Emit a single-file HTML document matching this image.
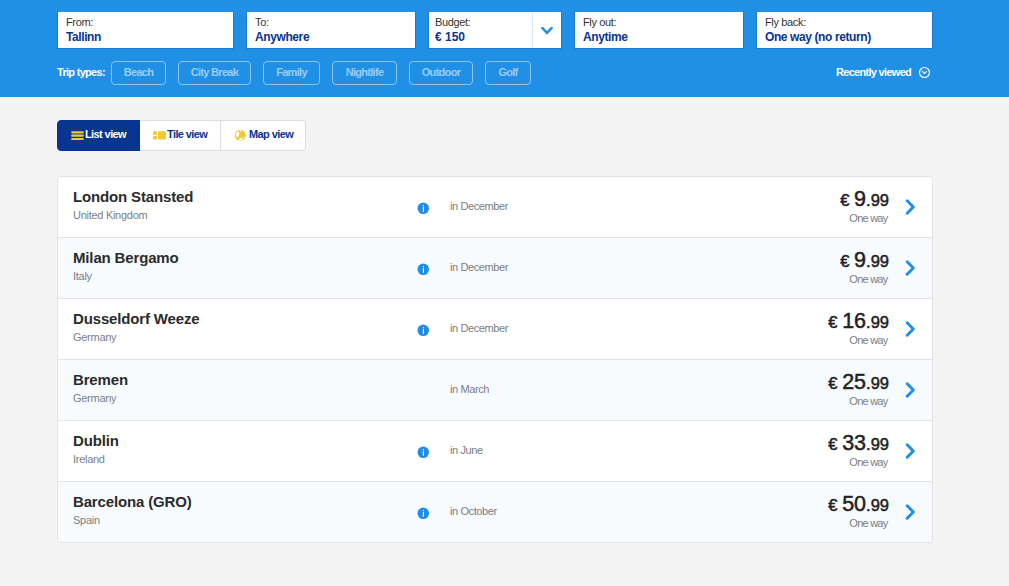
<!DOCTYPE html>
<html><head><meta charset="utf-8">
<style>
*{box-sizing:border-box;margin:0;padding:0}
html,body{width:1009px;height:586px;overflow:hidden;background:#f4f4f4;font-family:"Liberation Sans",sans-serif}
.a{position:absolute;white-space:nowrap}
.hdr{position:absolute;left:0;top:0;width:1009px;height:97px;background:#2090e6}
.inp{position:absolute;top:11px;height:38px;background:#fff;border:1px solid #1b7acb;border-top-color:#2a8de0}
.inp .lb{position:absolute;left:8px;top:4px;font-size:11px;color:#333;letter-spacing:-0.35px}
.inp .vl{position:absolute;left:8px;top:18px;font-size:12px;font-weight:bold;color:#073590;letter-spacing:-0.4px}
.chipl{position:absolute;left:57px;top:66px;font-size:11px;color:#fff;letter-spacing:-0.7px;font-weight:bold}
.chip{position:absolute;top:61px;height:24px;border:1px solid #8ac5f3;border-radius:4px;color:#9ccdf4;font-size:11px;text-align:center;line-height:21px;letter-spacing:-0.7px;font-weight:bold}
.rv{position:absolute;left:836px;top:66px;font-size:11px;color:#fff;letter-spacing:-0.7px;font-weight:bold}
.tog{position:absolute;top:120px;height:31px;border:1px solid #d9dee5;background:#fff}
.tt{position:absolute;top:128px;font-size:11px;font-weight:bold;color:#073590;letter-spacing:-0.6px;white-space:nowrap}
.card{position:absolute;left:57px;top:176px;width:876px;height:367px;border:1px solid #e1e5ea;border-radius:3px;background:#fff;overflow:hidden}
.row{position:absolute;left:0;width:874px;height:61px;border-top:1px solid #e1e5ea}
.row.alt{background:#f8fbfe}
.city{position:absolute;left:15px;top:10.5px;font-size:15px;font-weight:bold;color:#2b2b2b;letter-spacing:-0.15px;white-space:nowrap}
.ctry{position:absolute;left:15px;top:32px;font-size:11px;color:#7a7e84;letter-spacing:-0.28px;white-space:nowrap}
.info{position:absolute;left:359px;top:25px}
.when{position:absolute;left:392px;top:23px;font-size:11px;color:#7a7e84;letter-spacing:-0.4px;white-space:nowrap}
.price{position:absolute;right:43px;top:10px;font-size:16.5px;color:#222;text-align:right;-webkit-text-stroke:0.5px #222;white-space:nowrap}
.price b{font-size:21.5px;font-weight:normal}
.price .eu{font-size:16.5px}
.ow{position:absolute;right:44.5px;top:35px;font-size:11px;color:#7a7e84;letter-spacing:-0.75px;white-space:nowrap}
.chev{position:absolute;left:846px;top:21px}

</style></head><body>
<div class="hdr">
  <div class="inp" style="left:57px;width:177px"><div class="lb">From:</div><div class="vl">Tallinn</div></div>
  <div class="inp" style="left:246px;width:170px"><div class="lb">To:</div><div class="vl">Anywhere</div></div>
  <div class="inp" style="left:428px;width:134px"><div class="lb" style="left:6px">Budget:</div><div class="vl" style="left:6px;letter-spacing:0">€ 150</div>
    <div style="position:absolute;left:103px;top:0;width:1px;height:36px;background:#d6e8f8"></div>
    <svg style="position:absolute;left:112px;top:15px" width="12" height="9" viewBox="0 0 12 9"><polyline points="1.5,1.2 6,5.8 10.5,1.2" fill="none" stroke="#1f8fe8" stroke-width="2.6" stroke-linecap="round"/></svg>
  </div>
  <div class="inp" style="left:574px;width:170px"><div class="lb">Fly out:</div><div class="vl">Anytime</div></div>
  <div class="inp" style="left:756px;width:177px"><div class="lb">Fly back:</div><div class="vl">One way (no return)</div></div>
  <div class="chipl">Trip types:</div>
  <div class="chip" style="left:111px;width:55px">Beach</div>
  <div class="chip" style="left:178px;width:73px">City Break</div>
  <div class="chip" style="left:263px;width:57px">Family</div>
  <div class="chip" style="left:332px;width:65px">Nightlife</div>
  <div class="chip" style="left:409px;width:64px">Outdoor</div>
  <div class="chip" style="left:485px;width:46px">Golf</div>
  <div class="rv">Recently viewed</div>
  <svg style="position:absolute;left:918px;top:66px" width="13" height="13" viewBox="0 0 13 13"><circle cx="6.5" cy="6.5" r="5.0" fill="none" stroke="#fff" stroke-width="1.2"/><polyline points="4.1,5.1 6.5,7.5 8.9,5.1" fill="none" stroke="#fff" stroke-width="1.1"/></svg>
</div>
<div class="tog" style="left:57px;width:84px;background:#073590;border-color:#073590;border-radius:4px 0 0 4px"></div>
<svg class="a" style="left:71px;top:131px" width="13" height="10" viewBox="0 0 13 10"><g stroke="#f1c933" stroke-width="2.2" stroke-linecap="round"><line x1="1.2" y1="1.3" x2="11.8" y2="1.3"/><line x1="1.2" y1="4.7" x2="11.8" y2="4.7"/><line x1="1.2" y1="8" x2="11.8" y2="8"/></g></svg>
<div class="tt" style="left:85px;color:#fff">List view</div>
<div class="tog" style="left:140px;width:81px;border-left:none"></div>
<svg class="a" style="left:153px;top:131px" width="14" height="9" viewBox="0 0 14 9"><g fill="#f1c933"><rect x="0" y="0.3" width="4" height="3.6" rx="0.6"/><rect x="0" y="4.9" width="4" height="3.6" rx="0.6"/><rect x="5" y="0.3" width="8" height="8.2" rx="0.8"/></g></svg>
<div class="tt" style="left:167px">Tile view</div>
<div class="tog" style="left:220px;width:86px;border-radius:0 4px 4px 0"></div>
<svg class="a" style="left:234px;top:129px" width="12" height="12" viewBox="0 0 12 12"><circle cx="6.3" cy="6.3" r="5.5" fill="#f1c933"/><path transform="translate(0.3,0.3)" d="M1.8,4.2 L3.4,2.1 L5,2.4 L4.6,3.6 L5.6,4.6 L4.5,5.3 L4.3,7.5 L3,8.2 L1.6,6.4 Z M5.6,1.1 L7.2,1 L6.7,2.4 L5.8,2.6 Z M4.4,10.6 L5.3,8.7 L6.6,8.2 L8.1,9 L8.7,10.3 L6.6,11.2 Z M8.4,8.3 L9.4,7.2 L10.3,7.8 L9.7,8.7 Z" fill="#fff"/></svg>
<div class="tt" style="left:249px">Map view</div>
<div class="card">
<div class="row" style="top:-1px"><div class="city">London Stansted</div><div class="ctry">United Kingdom</div><svg class="info" width="13" height="13" viewBox="0 0 13 13"><circle cx="6.25" cy="6.35" r="5.75" fill="#1f8ce6"/><rect x="5.85" y="3" width="1.15" height="1.2" fill="#fff"/><rect x="5.85" y="5" width="1.15" height="4.8" fill="#fff"/></svg><div class="when">in December</div><div class="price"><span class="eu">€</span> <b>9</b>.99</div><div class="ow">One way</div><svg class="chev" width="12" height="18" viewBox="0 0 12 18"><polyline points="3.2,2.8 9.3,9 3.2,15.2" fill="none" stroke="#1f8fe8" stroke-width="3" stroke-linecap="round" stroke-linejoin="round"/></svg></div>
<div class="row alt" style="top:60px"><div class="city">Milan Bergamo</div><div class="ctry">Italy</div><svg class="info" width="13" height="13" viewBox="0 0 13 13"><circle cx="6.25" cy="6.35" r="5.75" fill="#1f8ce6"/><rect x="5.85" y="3" width="1.15" height="1.2" fill="#fff"/><rect x="5.85" y="5" width="1.15" height="4.8" fill="#fff"/></svg><div class="when">in December</div><div class="price"><span class="eu">€</span> <b>9</b>.99</div><div class="ow">One way</div><svg class="chev" width="12" height="18" viewBox="0 0 12 18"><polyline points="3.2,2.8 9.3,9 3.2,15.2" fill="none" stroke="#1f8fe8" stroke-width="3" stroke-linecap="round" stroke-linejoin="round"/></svg></div>
<div class="row" style="top:121px"><div class="city">Dusseldorf Weeze</div><div class="ctry">Germany</div><svg class="info" width="13" height="13" viewBox="0 0 13 13"><circle cx="6.25" cy="6.35" r="5.75" fill="#1f8ce6"/><rect x="5.85" y="3" width="1.15" height="1.2" fill="#fff"/><rect x="5.85" y="5" width="1.15" height="4.8" fill="#fff"/></svg><div class="when">in December</div><div class="price"><span class="eu">€</span> <b>16</b>.99</div><div class="ow">One way</div><svg class="chev" width="12" height="18" viewBox="0 0 12 18"><polyline points="3.2,2.8 9.3,9 3.2,15.2" fill="none" stroke="#1f8fe8" stroke-width="3" stroke-linecap="round" stroke-linejoin="round"/></svg></div>
<div class="row alt" style="top:182px"><div class="city">Bremen</div><div class="ctry">Germany</div><div class="when">in March</div><div class="price"><span class="eu">€</span> <b>25</b>.99</div><div class="ow">One way</div><svg class="chev" width="12" height="18" viewBox="0 0 12 18"><polyline points="3.2,2.8 9.3,9 3.2,15.2" fill="none" stroke="#1f8fe8" stroke-width="3" stroke-linecap="round" stroke-linejoin="round"/></svg></div>
<div class="row" style="top:243px"><div class="city">Dublin</div><div class="ctry">Ireland</div><svg class="info" width="13" height="13" viewBox="0 0 13 13"><circle cx="6.25" cy="6.35" r="5.75" fill="#1f8ce6"/><rect x="5.85" y="3" width="1.15" height="1.2" fill="#fff"/><rect x="5.85" y="5" width="1.15" height="4.8" fill="#fff"/></svg><div class="when">in June</div><div class="price"><span class="eu">€</span> <b>33</b>.99</div><div class="ow">One way</div><svg class="chev" width="12" height="18" viewBox="0 0 12 18"><polyline points="3.2,2.8 9.3,9 3.2,15.2" fill="none" stroke="#1f8fe8" stroke-width="3" stroke-linecap="round" stroke-linejoin="round"/></svg></div>
<div class="row alt" style="top:304px"><div class="city">Barcelona (GRO)</div><div class="ctry">Spain</div><svg class="info" width="13" height="13" viewBox="0 0 13 13"><circle cx="6.25" cy="6.35" r="5.75" fill="#1f8ce6"/><rect x="5.85" y="3" width="1.15" height="1.2" fill="#fff"/><rect x="5.85" y="5" width="1.15" height="4.8" fill="#fff"/></svg><div class="when">in October</div><div class="price"><span class="eu">€</span> <b>50</b>.99</div><div class="ow">One way</div><svg class="chev" width="12" height="18" viewBox="0 0 12 18"><polyline points="3.2,2.8 9.3,9 3.2,15.2" fill="none" stroke="#1f8fe8" stroke-width="3" stroke-linecap="round" stroke-linejoin="round"/></svg></div>
</div>

</body></html>
